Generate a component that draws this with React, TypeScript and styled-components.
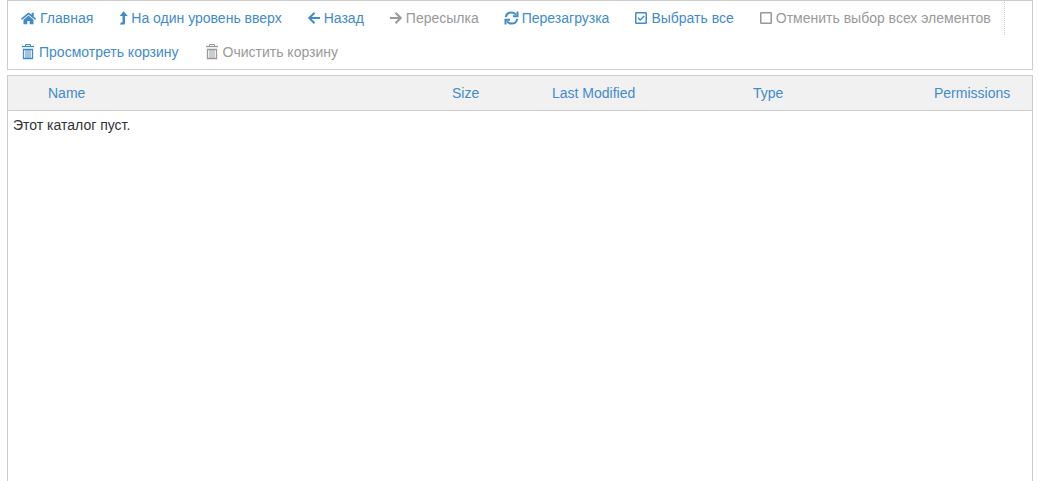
import React from "react";
import styled, { createGlobalStyle } from "styled-components";
import { FaHome } from "react-icons/fa";

const GlobalStyle = createGlobalStyle`
  *, *::before, *::after { box-sizing: border-box; }
  body {
    margin: 0;
    background: #fff;
    color: #333;
    font: 14px/20px "Liberation Sans", Arial, sans-serif;
  }
`;

const Page = styled.main`
  display: flex;
  flex-direction: column;
  gap: 5px;
  min-height: 100vh;
  padding: 0 5px 0 7px;
`;

const Toolbar = styled.nav`
  display: flex;
  flex-direction: column;
  align-items: flex-start;
  border: 1px solid #ccc;
`;

const ToolGroup = styled.div<{ $divided?: boolean }>`
  display: flex;
  flex-wrap: wrap;
  border-right: ${(p) => (p.$divided ? "1px dotted #ccc" : "none")};
`;

const ToolButton = styled.button`
  display: flex;
  align-items: center;
  gap: 4px;
  height: 34px;
  padding: 0 13px;
  border: 0;
  background: none;
  color: #428bca;
  font: inherit;
  white-space: nowrap;
  cursor: pointer;

  &:disabled {
    color: #999;
    cursor: default;
  }

  svg {
    flex: none;
    display: block;
    overflow: visible;
  }
`;

const Listing = styled.section`
  flex: 1;
  border: 1px solid #ccc;
  border-bottom: 0;
`;

const FileTable = styled.table`
  width: 100%;
  table-layout: fixed;
  border-collapse: collapse;
`;

const HeadCell = styled.th<{ $width?: number }>`
  width: ${(p) => (p.$width ? `${p.$width}px` : "auto")};
  height: 34px;
  padding: 0 5px;
  border-bottom: 1px solid #ccc;
  background: #f1f1f1;
  text-align: left;
  font-weight: normal;
`;

const SortButton = styled.button`
  padding: 0;
  border: 0;
  background: none;
  color: #428bca;
  font: inherit;
  cursor: pointer;
`;

const EmptyCell = styled.td`
  padding: 4px 5px;
`;

const UpIcon = () => (
  <svg width="8" height="14" viewBox="0 0 8 14" fill="currentColor" aria-hidden="true">
    <path d="M4.600 0.300L8.800 5H6v7.500c0 .7-.3 1-1 1H.7l1.600-2.200h1.200V5H.6z" />
  </svg>
);

const ArrowIcon = ({ right = false }: { right?: boolean }) => (
  <svg width="12" height="12" viewBox="0 0 12 12" fill="none" stroke="currentColor" strokeWidth="2" aria-hidden="true">
    <path d={right ? "M0 6h10.500M5.500 .8L10.700 6l-5.200 5.200" : "M12 6H1.500M6.500 .8L1.300 6l5.200 5.200"} />
  </svg>
);

const RefreshIcon = () => (
  <svg width="13" height="14" viewBox="0 0 13 14" fill="none" stroke="currentColor" strokeWidth="2" aria-hidden="true">
    <path d="M.8 6.200C1.300 3.300 3.600 1.400 6.500 1.400c1.900 0 3.400.8 4.500 2.200" />
    <path d="M12.200 7.800C11.700 10.700 9.400 12.600 6.500 12.600c-1.900 0-3.400-.8-4.500-2.200" />
    <path d="M12.500 .6v4.600H7.900" />
    <path d="M.5 13.400V8.800h4.600" />
  </svg>
);

const BoxIcon = ({ checked = false }: { checked?: boolean }) => (
  <svg width="12" height="12" viewBox="0 0 12 12" fill="none" stroke="currentColor" aria-hidden="true">
    <rect x=".75" y=".75" width="10.500" height="10.500" rx=".5" strokeWidth="1.500" />
    {checked && <path d="M3 5.800l2.200 2.200L9.200 4" strokeWidth="1.500" />}
  </svg>
);

const TrashIcon = () => (
  <svg width="14" height="18" viewBox="0 0 14 18" fill="none" stroke="currentColor" aria-hidden="true">
    <path d="M4.500 3V1.500h5V3" />
    <path d="M1 3.500h12" strokeWidth="1.300" />
    <path d="M2.500 6.500h9v9h-9z" strokeWidth="1.300" />
    <path d="M5 7v8M7 7v8M9 7v8" />
  </svg>
);

const columns = [
  { label: "Name" },
  { label: "Size", width: 100 },
  { label: "Last Modified", width: 201 },
  { label: "Type", width: 181 },
  { label: "Permissions", width: 103 },
];

export default function App() {
  return (
    <Page>
      <GlobalStyle />
      <Toolbar aria-label="Действия">
        <ToolGroup $divided>
          <ToolButton><FaHome size={15} />Главная</ToolButton>
          <ToolButton><UpIcon />На один уровень вверх</ToolButton>
          <ToolButton><ArrowIcon />Назад</ToolButton>
          <ToolButton disabled><ArrowIcon right />Пересылка</ToolButton>
          <ToolButton><RefreshIcon />Перезагрузка</ToolButton>
          <ToolButton><BoxIcon checked />Выбрать все</ToolButton>
          <ToolButton disabled><BoxIcon />Отменить выбор всех элементов</ToolButton>
        </ToolGroup>
        <ToolGroup>
          <ToolButton><TrashIcon />Просмотреть корзину</ToolButton>
          <ToolButton disabled><TrashIcon />Очистить корзину</ToolButton>
        </ToolGroup>
      </Toolbar>
      <Listing>
        <FileTable>
          <thead>
            <tr>
              <HeadCell as="td" $width={35} />
              {columns.map((c) => (
                <HeadCell key={c.label} scope="col" $width={c.width}>
                  <SortButton>{c.label}</SortButton>
                </HeadCell>
              ))}
            </tr>
          </thead>
          <tbody>
            <tr>
              <EmptyCell colSpan={6}>Этот каталог пуст.</EmptyCell>
            </tr>
          </tbody>
        </FileTable>
      </Listing>
    </Page>
  );
}
